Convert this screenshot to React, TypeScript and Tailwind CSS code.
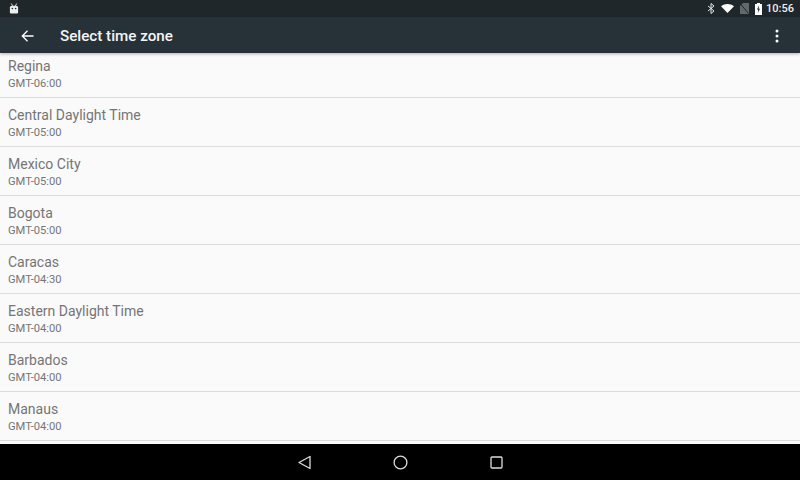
const ZONES = [
  { name: 'Regina', offset: 'GMT-06:00' },
  { name: 'Central Daylight Time', offset: 'GMT-05:00' },
  { name: 'Mexico City', offset: 'GMT-05:00' },
  { name: 'Bogota', offset: 'GMT-05:00' },
  { name: 'Caracas', offset: 'GMT-04:30' },
  { name: 'Eastern Daylight Time', offset: 'GMT-04:00' },
  { name: 'Barbados', offset: 'GMT-04:00' },
  { name: 'Manaus', offset: 'GMT-04:00' },
]

function StatusBar() {
  return (
    <div className="flex h-[17px] shrink-0 items-center justify-between bg-[#20272b] pl-[9px] pr-[6px]">
      <svg width="10" height="11" viewBox="0 0 11 12" className="text-[#eeeeee]" fill="currentColor">
        <path d="M1 5a2 2 0 0 1 2-2h5a2 2 0 0 1 2 2v5a1.5 1.5 0 0 1-1.5 1.5h-6A1.5 1.5 0 0 1 1 10z" />
        <path d="M2.5 0.5 4 3M8.500 0.500 7 3" stroke="currentColor" strokeWidth="1" />
        <circle cx="3.700" cy="6" r="0.900" fill="#20272b" />
        <circle cx="7.300" cy="6" r="0.900" fill="#20272b" />
      </svg>
      <div className="flex items-center">
        <svg width="8" height="11" viewBox="0 0 8 11" fill="none" stroke="#e8e8e8" strokeWidth="1" className="mr-[6px]">
          <path d="M1 3l6 5-3 2.500V0.500l3 2.500-6 5" />
        </svg>
        <svg width="13" height="9" viewBox="0 0 13 9" fill="#ffffff" className="mr-[6px]">
          <path d="M0 2.200C2 .8 4.200 0 6.500 0S11 .8 13 2.200L6.500 9z" />
        </svg>
        <svg width="9" height="11" viewBox="0 0 9 11" className="mr-[6px]">
          <path d="M3 0h6v11H0V3z" fill="#62686b" />
          <path d="M0.500 1 8.500 10.500" stroke="#20272b" strokeWidth="1" />
        </svg>
        <svg width="7" height="12" viewBox="0 0 7 12" className="mr-[4px]">
          <path d="M2 0h3v1h2v11H0V1h2z" fill="#ffffff" />
          <path d="M4 2.500 2 6.500h1.300L2.800 10 5 5.800H3.700z" fill="#20272b" />
        </svg>
        <span className="w-[28px] text-right font-['Roboto',sans-serif] text-[11px] leading-[17px] font-medium text-[#eeeeee]">10:56</span>
      </div>
    </div>
  )
}

function AppBar() {
  return (
    <div className="z-10 flex h-[36px] shrink-0 items-center bg-[#263238] pt-[1px] shadow-[0_1px_3px_rgba(0,0,0,0.3)]">
      <svg width="14" height="14" viewBox="0 0 14 14" fill="none" stroke="#ffffff" strokeWidth="1.300" className="ml-[21px]">
        <path d="M12.500 7H1.500M6.500 1.800 1.300 7l5.200 5.200" />
      </svg>
      <span className="mt-[1px] ml-[25px] font-['Roboto',sans-serif] text-[15.200px] font-medium text-[#f4f5f5]">Select time zone</span>
      <svg width="4" height="14" viewBox="0 0 4 14" fill="#ffffff" className="mr-[21px] ml-auto">
        <circle cx="2" cy="2" r="1.500" />
        <circle cx="2" cy="7" r="1.500" />
        <circle cx="2" cy="12" r="1.500" />
      </svg>
    </div>
  )
}

function NavBar() {
  return (
    <div className="flex h-[36px] shrink-0 items-center justify-center gap-[81px] bg-black">
      <svg width="15" height="15" viewBox="0 0 15 15" fill="none" stroke="#dddddd" strokeWidth="1.300">
        <path d="M13 1.500v12L2 7.500z" strokeLinejoin="round" />
      </svg>
      <svg width="15" height="15" viewBox="0 0 15 15" fill="none" stroke="#dddddd" strokeWidth="1.300">
        <circle cx="7.500" cy="7.500" r="6.400" />
      </svg>
      <svg width="15" height="15" viewBox="0 0 15 15" fill="none" stroke="#dddddd" strokeWidth="1.300">
        <rect x="2" y="2" width="11" height="11" rx="1" />
      </svg>
    </div>
  )
}

export default function App() {
  return (
    <div className="flex h-[480px] w-[800px] flex-col overflow-hidden bg-[#fafafa] font-['Roboto',sans-serif]">
      <StatusBar />
      <AppBar />
      <div className="flex-1 overflow-hidden">
        {ZONES.map((zone) => (
          <div key={zone.name} className="flex h-[49px] flex-col border-b border-[#dcdcdc] pt-[7px] pl-[8px] first:h-[45px] first:pt-[3px]">
            <span className="text-[14px] leading-[20px] text-[#757575]">{zone.name}</span>
            <span className="mt-[1px] text-[11.200px] leading-[14px] text-[#757575]">{zone.offset}</span>
          </div>
        ))}
      </div>
      <NavBar />
    </div>
  )
}
